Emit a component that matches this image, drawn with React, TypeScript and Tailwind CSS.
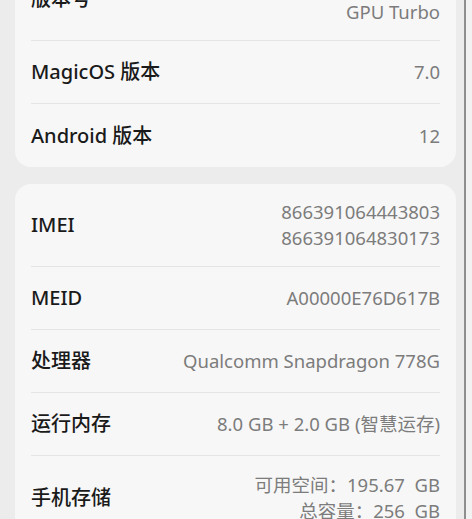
import React from "react";

type Row = { label: string; values: string[] };

const card1: Row[] = [
  { label: "版本号", values: ["7.0.0.183(C00E180R4P3)", "GPU Turbo"] },
  { label: "MagicOS 版本", values: ["7.0"] },
  { label: "Android 版本", values: ["12"] },
];

const card2: Row[] = [
  { label: "IMEI", values: ["866391064443803", "866391064830173"] },
  { label: "MEID", values: ["A00000E76D617B"] },
  { label: "处理器", values: ["Qualcomm Snapdragon 778G"] },
  { label: "运行内存", values: ["8.0 GB + 2.0 GB (智慧运存)"] },
  { label: "手机存储", values: ["可用空间：195.67  GB", "总容量：256  GB"] },
];

const font = { fontFamily: '"Noto Sans", "Noto Sans CJK SC", sans-serif' };

function Card({ rows }: { rows: Row[] }) {
  return (
    <div className="ml-[15px] mr-[8px] rounded-[16px] bg-[#f7f7f7] px-[16px]">
      {rows.map((r, i) => (
        <div
          key={i}
          className={`flex items-center justify-between ${
            r.values.length > 1 ? "h-[83px]" : "h-[63px]"
          } ${i < rows.length - 1 ? "border-b border-[#e4e4e6]" : ""}`}
        >
          <div className="text-[20px] font-medium text-[#1a1a1a] whitespace-nowrap">{r.label}</div>
          <div className="flex flex-col items-end text-[18.5px] leading-[26px] text-[#7c7c7c] whitespace-pre">
            {r.values.map((v, j) => (
              <div key={j}>{v}</div>
            ))}
          </div>
        </div>
      ))}
    </div>
  );
}

export default function App() {
  return (
    <div className="flex h-[519px] w-[472px] overflow-hidden bg-[#ececec]" style={font}>
      <div className="flex w-[464px] flex-col">
        <div className="-mt-[42px] flex flex-col gap-[17px]">
          <Card rows={card1} />
          <Card rows={card2} />
        </div>
      </div>
      <div className="w-[2px] bg-[#8e8e8e]" />
      <div className="flex-1 bg-[#f2f2f2]" />
    </div>
  );
}
